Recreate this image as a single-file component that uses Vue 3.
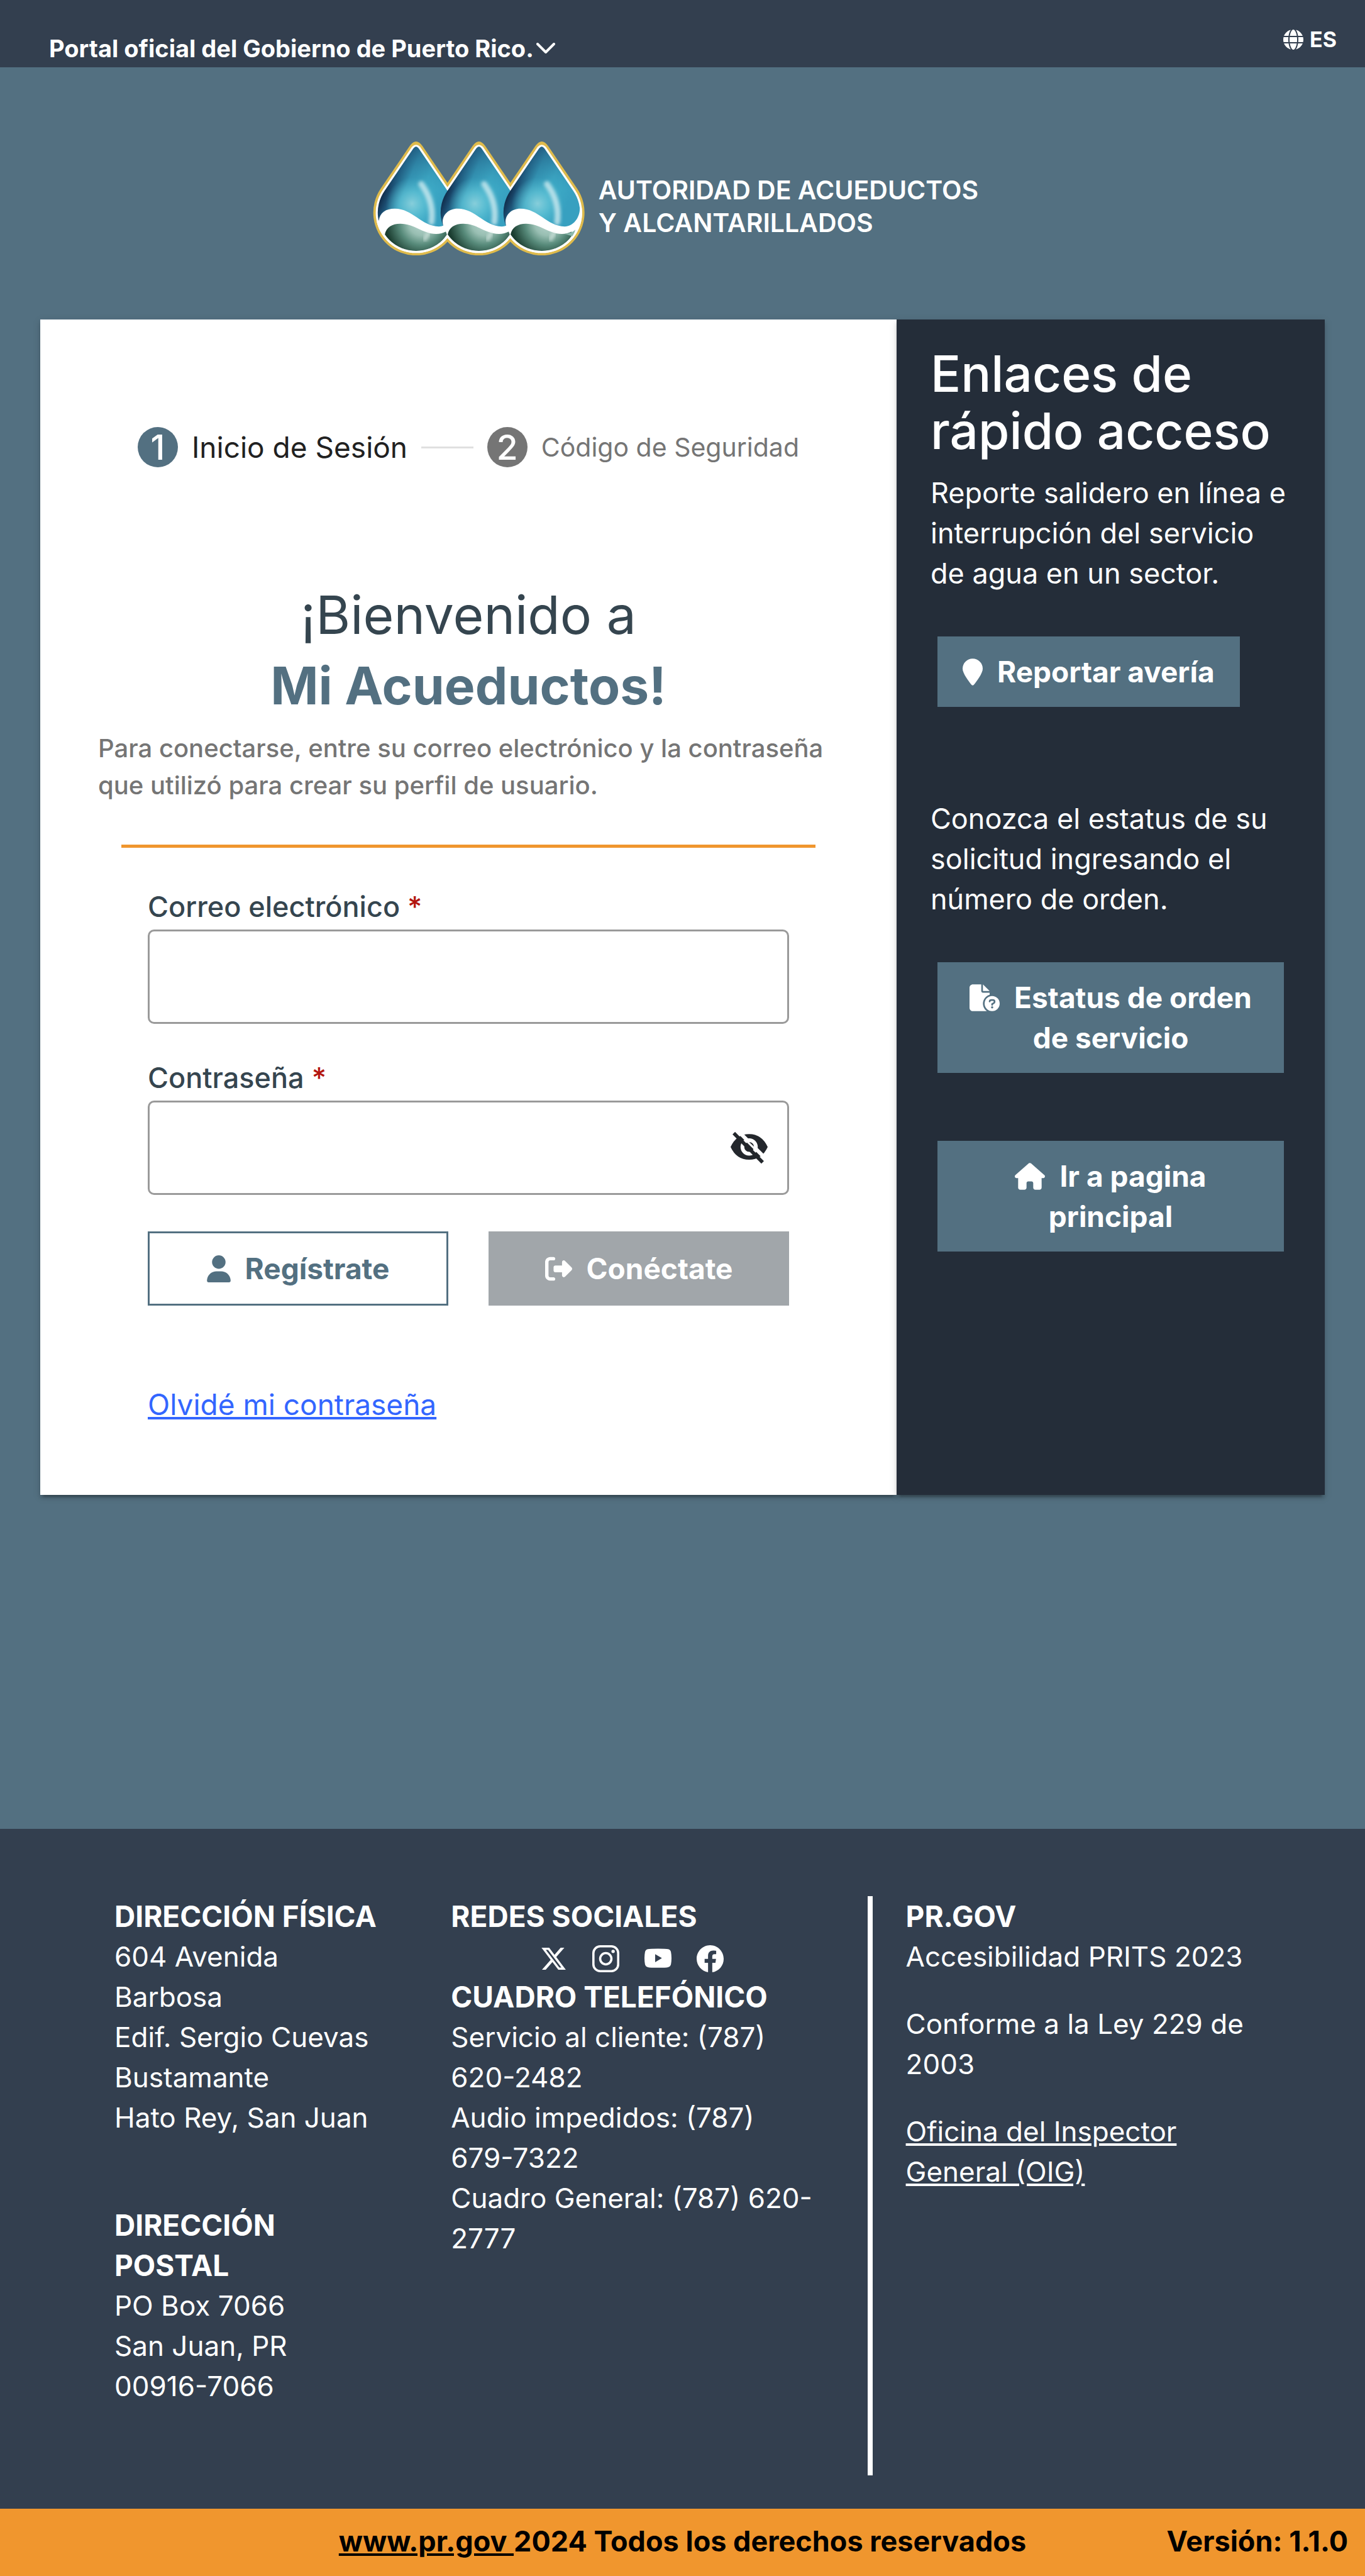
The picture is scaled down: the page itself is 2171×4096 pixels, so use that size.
<script setup>
import { ref } from 'vue'

const email = ref('')
const password = ref('')
const drops = [0, 338, 676]
</script>

<template>
  <div class="page">
    <header class="topbar">
      <button type="button" class="official">
        <span>Portal oficial del Gobierno de Puerto Rico.</span>
        <svg class="chevron" viewBox="0 0 30 18" aria-hidden="true"><path d="M2 2 15 15 28 2" fill="none" stroke="currentColor" stroke-width="4" stroke-linecap="round" stroke-linejoin="round" /></svg>
      </button>
      <button type="button" class="lang">
        <svg class="globe" viewBox="0 0 512 512" aria-hidden="true"><path fill="currentColor" d="M352 256c0 22.2-1.2 43.6-3.3 64H163.3c-2.2-20.4-3.3-41.8-3.3-64s1.2-43.6 3.3-64H348.7c2.2 20.4 3.3 41.8 3.3 64zm28.8-64H503.9c5.3 20.5 8.1 41.9 8.1 64s-2.8 43.5-8.1 64H380.8c2.1-20.6 3.2-42 3.2-64s-1.1-43.4-3.2-64zm112.6-32H376.7c-10-63.9-29.8-117.4-55.3-151.6c78.3 20.7 142 77.5 171.9 151.6zm-149.1 0H167.7c6.1-36.4 15.5-68.6 27-94.7c10.5-23.6 22.2-40.7 33.5-51.5C239.4 3.2 248.7 0 256 0s16.6 3.2 27.8 13.8c11.3 10.8 23 27.9 33.5 51.5c11.6 26 20.9 58.2 27 94.7zm-209 0H18.6C48.6 85.9 112.2 29.1 190.6 8.4C165.1 42.6 145.3 96.1 135.3 160zM8.1 192H131.2c-2.1 20.6-3.2 42-3.2 64s1.1 43.4 3.2 64H8.1C2.8 299.5 0 278.1 0 256s2.8-43.5 8.1-64zM194.7 446.6c-11.6-26-20.9-58.2-27-94.6H344.3c-6.1 36.4-15.5 68.6-27 94.6c-10.5 23.6-22.2 40.7-33.5 51.5C272.6 508.8 263.3 512 256 512s-16.6-3.2-27.8-13.8c-11.3-10.8-23-27.9-33.5-51.5zM135.3 352c10 63.9 29.8 117.4 55.3 151.6C112.2 482.9 48.6 426.1 18.6 352H135.3zm358.1 0c-30 74.1-93.6 130.9-171.9 151.6c25.5-34.2 45.2-87.7 55.3-151.6H493.4z" /></svg>
        <span>ES</span>
      </button>
    </header>

    <main>
      <div class="brand">
        <svg class="brand-mark" viewBox="77 66 1138 612" aria-hidden="true">
          <defs>
            <linearGradient id="water" gradientUnits="userSpaceOnUse" x1="150" y1="300" x2="440" y2="420">
              <stop offset="0" stop-color="#12304f" />
              <stop offset="0.1" stop-color="#1b4c70" />
              <stop offset="0.32" stop-color="#3698b6" />
              <stop offset="0.6" stop-color="#3fadc8" />
              <stop offset="1" stop-color="#37a0c0" />
            </linearGradient>
            <linearGradient id="shade" gradientUnits="userSpaceOnUse" x1="300" y1="94" x2="300" y2="330">
              <stop offset="0" stop-color="#205a80" stop-opacity="0.75" />
              <stop offset="1" stop-color="#2b86ab" stop-opacity="0" />
            </linearGradient>
            <radialGradient id="glow" gradientUnits="userSpaceOnUse" cx="285" cy="400" r="140">
              <stop offset="0" stop-color="#8fd2dd" stop-opacity="0.9" />
              <stop offset="0.45" stop-color="#62c3d6" stop-opacity="0.7" />
              <stop offset="1" stop-color="#4ab4cc" stop-opacity="0" />
            </radialGradient>
            <radialGradient id="moss" gradientUnits="userSpaceOnUse" cx="335" cy="505" r="190">
              <stop offset="0" stop-color="#b9d6cf" />
              <stop offset="0.35" stop-color="#98beb2" />
              <stop offset="0.62" stop-color="#578a7a" />
              <stop offset="1" stop-color="#1b3d30" />
            </radialGradient>
            <filter id="soft" x="-50%" y="-50%" width="200%" height="200%"><feGaussianBlur stdDeviation="9" /></filter>
            <clipPath id="whole">
              <path v-for="x in drops" :key="x" :transform="`translate(${x} 0)`" d="M285 95Q307 73 329 95L486 326A217 217 0 1 1 128 326Z" />
            </clipPath>
            <clipPath id="bowl"><circle cx="307" cy="448" r="206" /></clipPath>
          </defs>
          <path v-for="x in drops" :key="'g' + x" :transform="`translate(${x} 0)`" fill="#dfbb4c" d="M273 90Q307 42 341 90L497 319A230 230 0 1 1 117 319Z" />
          <path v-for="x in drops" :key="'w' + x" :transform="`translate(${x} 0)`" fill="#fff" d="M285 95Q307 73 329 95L486 326A217 217 0 1 1 128 326Z" />
          <g v-for="x in drops" :key="'b' + x" :transform="`translate(${x} 0)`">
            <path fill="url(#water)" d="M293 103Q307 84 321 103L477 332A206 206 0 1 1 137 332Z" />
            <path fill="url(#shade)" d="M293 103Q307 84 321 103L477 332A206 206 0 1 1 137 332Z" />
            <path fill="url(#glow)" d="M293 103Q307 84 321 103L477 332A206 206 0 1 1 137 332Z" />
            <path d="M335 295Q405 390 390 500" fill="none" stroke="#d6eef2" stroke-opacity="0.75" stroke-width="32" stroke-linecap="round" filter="url(#soft)" />
          </g>
          <g clip-path="url(#whole)">
            <path fill="#fff" d="M70 490H107C113 448 145 427 192 427C290 427 335 522 430 523Q445 523 453 518C440 470 475 427 530 427C628 427 673 522 768 523Q783 523 791 518C778 470 813 427 868 427C966 427 1011 522 1106 523C1152 521 1186 480 1188 425H1230V690H70Z" />
          </g>
          <g v-for="x in drops" :key="'m' + x" :transform="`translate(${x} 0)`" clip-path="url(#bowl)">
            <path fill="url(#moss)" d="M139 566C146 528 178 508 222 508C300 508 340 562 415 563Q445 562 467 550L473 566C430 630 380 655 307 655C230 655 180 625 139 566Z" />
            <path d="M372 562L355 590" fill="none" stroke="#e0efea" stroke-opacity="0.6" stroke-width="24" stroke-linecap="round" filter="url(#soft)" />
          </g>
          <path fill="#8db9ac" d="M1106 563Q1142 560 1164 540Q1160 556 1148 575Z" />
        </svg>
        <p class="brand-name">AUTORIDAD DE ACUEDUCTOS<br />Y ALCANTARILLADOS</p>
      </div>

      <div class="card">
        <section class="login">
          <ol class="stepper">
            <li class="step current"><span class="badge">1</span><span class="step-name">Inicio de Sesión</span></li>
            <li class="rail" aria-hidden="true"></li>
            <li class="step"><span class="badge">2</span><span class="step-name">Código de Seguridad</span></li>
          </ol>

          <h1>¡Bienvenido a<br /><strong>Mi Acueductos!</strong></h1>
          <p class="intro">Para conectarse, entre su correo electrónico y la contraseña<br />que utilizó para crear su perfil de usuario.</p>
          <hr />

          <form @submit.prevent>
            <div class="field">
              <label for="email">Correo electrónico <span class="req">*</span></label>
              <input id="email" v-model="email" type="email" />
            </div>
            <div class="field">
              <label for="password">Contraseña <span class="req">*</span></label>
              <div class="secret">
                <input id="password" v-model="password" type="password" />
                <button type="button" class="peek" aria-label="Mostrar contraseña">
                  <svg viewBox="69 87 198 170" aria-hidden="true">
                    <path fill="#23272c" d="M69 168Q100 99 168 99T267 168Q236 236 168 236T69 168Z" />
                    <circle cx="168" cy="168" r="36" fill="#23272c" stroke="#fff" stroke-width="20" />
                    <path d="M104 78 262 236" stroke="#fff" stroke-width="20" />
                    <path d="M168 142A26 26 0 0 1 194 166Z" fill="#23272c" />
                    <path d="M86 94 240 250" stroke="#23272c" stroke-width="19" />
                  </svg>
                </button>
              </div>
            </div>
            <div class="actions">
              <button type="button" class="btn outline">
                <svg class="i-user" viewBox="0 0 448 512" aria-hidden="true"><path fill="currentColor" d="M224 256A128 128 0 1 0 224 0a128 128 0 1 0 0 256zm-45.7 48C79.8 304 0 383.8 0 482.3C0 498.7 13.3 512 29.7 512l388.6 0c16.4 0 29.7-13.3 29.7-29.7C448 383.8 368.2 304 269.7 304l-91.4 0z" /></svg>Regístrate
              </button>
              <button type="submit" class="btn muted">
                <svg class="i-exit" viewBox="0 0 512 512" aria-hidden="true"><path fill="currentColor" d="M377.9 105.9L500.7 228.7c7.2 7.2 11.3 17.1 11.3 27.3s-4.1 20.1-11.3 27.3L377.9 406.1c-6.4 6.4-15 9.9-24 9.9c-18.7 0-33.9-15.2-33.9-33.9l0-62.1-128 0c-17.7 0-32-14.3-32-32l0-64c0-17.7 14.3-32 32-32l128 0 0-62.1c0-18.7 15.2-33.9 33.9-33.9c9 0 17.6 3.6 24 9.9zM160 96L96 96c-17.7 0-32 14.3-32 32l0 256c0 17.7 14.3 32 32 32l64 0c17.7 0 32 14.3 32 32s-14.3 32-32 32l-64 0c-53 0-96-43-96-96L0 128C0 75 43 32 96 32l64 0c17.7 0 32 14.3 32 32s-14.3 32-32 32z" /></svg>Conéctate
              </button>
            </div>
            <a class="forgot" href="#">Olvidé mi contraseña</a>
          </form>
        </section>

        <aside class="links">
          <h2>Enlaces de<br />rápido acceso</h2>
          <p>Reporte salidero en línea e<br />interrupción del servicio<br />de agua en un sector.</p>
          <button type="button" class="btn solid compact">
            <svg class="i-pin" viewBox="0 0 384 512" aria-hidden="true"><path fill="currentColor" d="M384 192c0 87.4-117 243-168.3 307.2c-12.3 15.3-35.1 15.3-47.4 0C117 435 0 279.4 0 192C0 86 86 0 192 0S384 86 384 192z" /></svg>Reportar avería
          </button>
          <p class="status">Conozca el estatus de su<br />solicitud ingresando el<br />número de orden.</p>
          <button type="button" class="btn solid">
            <svg class="i-wide" viewBox="0 0 576 512" aria-hidden="true">
              <path fill="currentColor" d="M0 64C0 28.7 28.7 0 64 0H224V128c0 17.7 14.3 32 32 32H384v38.6C310.1 219.5 256 287.4 256 368c0 59.1 29.1 111.3 73.7 143.3c-3.2 .5-6.4 .7-9.7 .7H64c-35.3 0-64-28.7-64-64V64zm384 64H256V0L384 128z" />
              <circle cx="432" cy="368" r="144" fill="currentColor" />
              <path d="M384 326Q388 300 418 300H446Q478 300 478 331Q478 350 460 360L432 376V392" fill="none" stroke="#537081" stroke-width="32" stroke-linecap="round" />
              <circle cx="432" cy="440" r="21" fill="#537081" />
            </svg>Estatus de orden<br />de servicio
          </button>
          <button type="button" class="btn solid home">
            <svg class="i-wide" viewBox="0 0 576 512" aria-hidden="true"><path fill="currentColor" d="M575.8 255.5c0 18-15 32.1-32 32.1l-32 0 .7 160.2c0 2.7-.2 5.4-.5 8.1l0 16.2c0 22.1-17.9 40-40 40l-16 0c-1.1 0-2.2 0-3.3-.1c-1.4 .1-2.8 .1-4.2 .1L416 512l-24 0c-22.1 0-40-17.9-40-40l0-24 0-64c0-17.7-14.3-32-32-32l-64 0c-17.7 0-32 14.3-32 32l0 64 0 24c0 22.1-17.9 40-40 40l-24 0-31.9 0c-1.5 0-3-.1-4.5-.2c-1.2 .1-2.4 .2-3.6 .2l-16 0c-22.1 0-40-17.9-40-40l0-112c0-.9 0-1.9 .1-2.8l0-69.7-32 0c-18 0-32-14-32-32.1c0-9 3-17 10-24L266.4 8c7-7 15-8 22-8s15 2 21 7L564.8 231.5c8 7 12 15 11 24z" /></svg>Ir a pagina<br />principal
          </button>
        </aside>
      </div>
    </main>

    <footer>
      <div class="columns">
        <div class="col addresses">
          <div>
            <h3>DIRECCIÓN FÍSICA</h3>
            <p>604 Avenida<br />Barbosa<br />Edif. Sergio Cuevas<br />Bustamante<br />Hato Rey, San Juan</p>
          </div>
          <div>
            <h3>DIRECCIÓN<br />POSTAL</h3>
            <p>PO Box 7066<br />San Juan, PR<br />00916-7066</p>
          </div>
        </div>
        <div class="col">
          <h3>REDES SOCIALES</h3>
          <div class="social">
            <a href="#" aria-label="X"><svg viewBox="0 0 512 512"><path fill="currentColor" d="M389.2 48h70.6L305.6 224.2 487 464H345L233.7 318.6 106.5 464H35.8L200.7 275.5 26.8 48H172.4L272.9 180.9 389.2 48zM364.4 421.8h39.1L151.1 88h-42L364.4 421.8z" /></svg></a>
            <a href="#" aria-label="Instagram"><svg viewBox="0 0 48 48"><rect x="2" y="2" width="44" height="44" rx="12" fill="none" stroke="currentColor" stroke-width="4" /><circle cx="24" cy="24" r="10" fill="none" stroke="currentColor" stroke-width="4" /><circle cx="37" cy="11" r="3" fill="currentColor" /></svg></a>
            <a href="#" aria-label="YouTube"><svg viewBox="0 0 48 48"><path fill="currentColor" fill-rule="evenodd" d="M24 6Q38 6 42 7Q46 8 47 12Q48 17 48 23T47 34Q46 38 42 39Q38 40 24 40T6 39Q2 38 1 34Q0 29 0 23T1 12Q2 8 6 7Q10 6 24 6ZM19 16V30L31 23Z" /></svg></a>
            <a href="#" aria-label="Facebook"><svg viewBox="0 0 16 16"><path fill="currentColor" d="M16 8.049c0-4.446-3.582-8.05-8-8.05C3.58 0-.002 3.603-.002 8.05c0 4.017 2.926 7.347 6.75 7.951v-5.625h-2.03V8.05H6.75V6.275c0-2.017 1.195-3.131 3.022-3.131.876 0 1.791.157 1.791.157v1.98h-1.009c-.993 0-1.303.621-1.303 1.258v1.51h2.218l-.354 2.326H9.25V16c3.824-.604 6.75-3.934 6.75-7.951" /></svg></a>
          </div>
          <h3>CUADRO TELEFÓNICO</h3>
          <p>Servicio al cliente: (787)<br />620-2482<br />Audio impedidos: (787)<br />679-7322<br />Cuadro General: (787) 620-<br />2777</p>
        </div>
        <div class="col ruled">
          <h3>PR.GOV</h3>
          <p>Accesibilidad PRITS 2023</p>
          <p class="spaced">Conforme a la Ley 229 de<br />2003</p>
          <p class="spaced"><a href="#">Oficina del Inspector<br />General (OIG)</a></p>
        </div>
      </div>
      <div class="legal">
        <p class="rights"><a href="#">www.pr.gov&nbsp;</a>2024 Todos los derechos reservados</p>
        <p class="version">Versión: 1.1.0</p>
      </div>
    </footer>
  </div>
</template>

<style>
body {
  margin: 0;
}
</style>

<style scoped>
.page {
  display: flex;
  flex-direction: column;
  min-height: 100vh;
  background: #537081;
  color: #fff;
  font-family: Inter, "Open Sans", sans-serif;
  font-size: 45px;
  line-height: 64px;
}
.page *,
.page *::before {
  box-sizing: border-box;
}
p,
h1,
h2,
h3,
ol {
  margin: 0;
  padding: 0;
}
h3 {
  font-size: 46px;
  font-weight: 700;
}
button {
  font: inherit;
  color: inherit;
  border: 0;
  border-radius: 0;
  background: none;
  padding: 0;
}
a {
  color: inherit;
}
svg {
  flex: none;
}

.topbar {
  display: flex;
  justify-content: space-between;
  align-items: flex-start;
  height: 107px;
  padding: 39px 45px 0 78px;
  background: #333f4f;
}
.official,
.lang {
  display: flex;
  align-items: center;
  line-height: 48px;
  font-weight: 700;
}
.official {
  gap: 4px;
  margin-top: 14px;
  font-size: 38px;
}
.chevron {
  width: 30px;
  height: 18px;
}
.lang {
  gap: 10px;
  font-size: 34px;
}
.globe {
  width: 32px;
  height: 32px;
}

main {
  flex: 1;
  padding: 118px 64px 0;
}
.brand {
  display: flex;
  justify-content: center;
  align-items: center;
  gap: 21px;
  padding-right: 22px;
  margin-bottom: 102px;
}
.brand-mark {
  width: 338px;
  height: 181px;
}
.brand-name {
  padding-top: 24px;
  font-size: 41px;
  line-height: 52px;
  font-weight: 600;
}

.card {
  display: grid;
  grid-template-columns: minmax(0, 2fr) minmax(0, 1fr);
}
.login,
.links {
  box-shadow: 0 8px 3px -5px rgba(0, 0, 0, 0.2), 0 5px 5px rgba(0, 0, 0, 0.14), 0 3px 13px rgba(0, 0, 0, 0.12);
}
.login {
  padding: 171px 0 111px;
  background: #fff;
  color: #35454f;
}
.stepper {
  display: flex;
  align-items: center;
  margin: 0 155px;
  list-style: none;
}
.step {
  display: flex;
  align-items: center;
  gap: 22px;
  color: #757575;
  font-size: 41px;
}
.step.current {
  color: #212121;
  font-size: 46px;
}
.badge {
  width: 64px;
  height: 64px;
  border-radius: 50%;
  background: #757575;
  color: #fff;
  font-size: 55px;
  font-weight: 500;
  text-align: center;
}
.current .badge {
  background: #537081;
}
.step-name {
  white-space: nowrap;
}
.rail {
  flex: 1;
  height: 3px;
  margin: 0 22px;
  background: #e0e0e0;
}
h1 {
  margin-top: 179px;
  font-size: 84px;
  line-height: 112px;
  font-weight: 400;
  text-align: center;
}
h1 strong {
  color: #537081;
  font-size: 82px;
  font-weight: 700;
}
.intro {
  margin: 13px 0 65px 92px;
  color: #757575;
  font-size: 40px;
  line-height: 59px;
  font-weight: 500;
  white-space: nowrap;
}
hr {
  height: 5px;
  margin: 0 129px;
  border: 0;
  background: #f0962e;
}
form {
  padding: 62px 171px 0;
}
.field + .field {
  margin-top: 54px;
}
label {
  display: block;
  margin-bottom: 4px;
  font-weight: 500;
}
.req {
  color: #b3150f;
}
input {
  display: block;
  width: 100%;
  height: 150px;
  padding: 0 32px;
  border: 3px solid #9a9a9a;
  border-radius: 10px;
  background: #fff;
  font: inherit;
}
.secret {
  position: relative;
}
.peek {
  position: absolute;
  top: 50%;
  right: 34px;
  display: flex;
  transform: translateY(-50%);
}
.peek svg {
  width: 59px;
  height: 51px;
}
.actions {
  display: grid;
  grid-template-columns: 1fr 1fr;
  gap: 64px;
  margin-top: 58px;
}
.btn {
  padding: 24px 40px;
  font-size: 46px;
  font-weight: 700;
  text-align: center;
}
.btn svg {
  height: 43px;
  margin-right: 23px;
  vertical-align: -5px;
}
.actions .btn {
  height: 118px;
}
.outline {
  border: 3px solid #537081;
  padding: 21px 40px;
  color: #537081;
}
.muted {
  background: #a1a6aa;
  color: #fff;
}
.btn .i-user {
  width: 38px;
}
.i-pin {
  width: 32px;
}
.i-exit {
  width: 43px;
}
.i-wide {
  width: 48px;
}
.forgot {
  display: inline-block;
  margin-top: 125px;
  color: #3366ff;
  font-size: 46px;
}

.links {
  padding: 40px 54px;
  background: #242d39;
}
h2 {
  margin-bottom: 22px;
  font-size: 80px;
  line-height: 91px;
  font-weight: 500;
  white-space: nowrap;
}
.links p {
  white-space: nowrap;
}
.solid {
  display: block;
  width: calc(100% - 22px);
  margin: 68px 11px 0;
  background: #537081;
}
.compact {
  width: auto;
}
.status {
  margin-top: 146px;
}
.home {
  margin-top: 108px;
}

footer {
  background: #333f4f;
}
.columns {
  display: grid;
  grid-template-columns: 535fr 662fr 791fr;
  padding: 107px 0 53px 182px;
}
.columns p {
  font-size: 44px;
}
.addresses {
  display: grid;
  gap: 107px;
  padding-bottom: 110px;
}
.social {
  display: flex;
  justify-content: center;
  gap: 40px;
  height: 64px;
  padding-top: 14px;
  margin-right: 86px;
}
.social a {
  height: 43px;
}
.social svg {
  display: block;
  width: 43px;
  height: 43px;
}
.ruled {
  padding-left: 53px;
  border-left: 8px solid #fff;
}
.spaced {
  margin-top: 43px;
}
.legal {
  display: grid;
  grid-template-columns: 1fr auto 1fr;
  padding: 20px 27px 23px;
  background: #f0962e;
  color: #000;
  font-weight: 700;
}
.rights {
  grid-column: 2;
}
.version {
  text-align: right;
}
</style>
